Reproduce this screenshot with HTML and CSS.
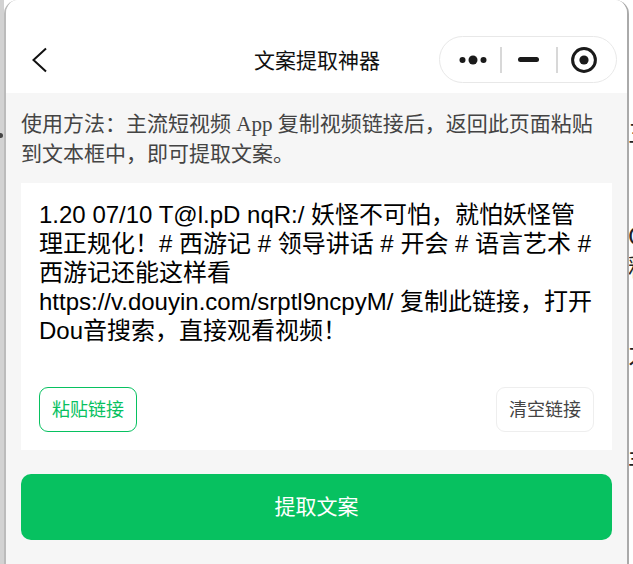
FILE: index.html
```html
<!DOCTYPE html>
<html lang="zh-CN">

<head>
    <meta charset="UTF-8">
    <meta name="viewport" content="width=device-width, initial-scale=1.0">
    <title>文案提取神器</title>
    <link rel="stylesheet" href="styles.css">
</head>

<body>
    <div class="backdrop">
        <span class="edge-dot"></span>
        <div class="phone">
            <div class="nav-bar">
                <svg class="back" width="18" height="28" viewBox="0 0 18 28">
                    <path d="M15 2.5 L2.5 14 L15 25.5" fill="none" stroke="#111" stroke-width="2" />
                </svg>
                <div class="nav-title">文案提取神器</div>
                <div class="capsule">
                    <svg class="capsule-more" width="28" height="10" viewBox="0 0 28 10">
                        <circle cx="3.5" cy="5" r="3" fill="#1a1a1a" />
                        <circle cx="14" cy="5" r="4.5" fill="#1a1a1a" />
                        <circle cx="24.5" cy="5" r="3" fill="#1a1a1a" />
                    </svg>
                    <span class="capsule-line"></span>
                    <span class="capsule-min"></span>
                    <span class="capsule-line"></span>
                    <svg class="capsule-close" width="26" height="26" viewBox="0 0 26 26">
                        <circle cx="13" cy="13" r="11.4" fill="none" stroke="#1a1a1a" stroke-width="3" />
                        <circle cx="13" cy="13" r="4.6" fill="#1a1a1a" />
                    </svg>
                </div>
            </div>
            <div class="content">
                <p class="tips">使用方法：主流短视频 App 复制视频链接后，返回此页面粘贴到文本框中，即可提取文案。</p>
                <div class="input-card">
                    <p class="link-text">1.20 07/10 T@l.pD nqR:/ 妖怪不可怕，就怕妖怪管理正规化！# 西游记 # 领导讲话 # 开会 # 语言艺术 # 西游记还能这样看<br>https://v.douyin.com/srptl9ncpyM/ 复制此链接，打开Dou音搜索，直接观看视频！</p>
                    <div class="card-actions">
                        <button type="button" class="btn-paste">粘贴链接</button>
                        <button type="button" class="btn-clear">清空链接</button>
                    </div>
                </div>
                <button type="button" class="btn-extract">提取文案</button>
            </div>
        </div>
        <!-- 窗口后面露出来的页面文字 -->
        <div class="peek">
            <span class="peek-a">三</span>
            <span class="peek-b">C</span>
            <span class="peek-c">释</span>
            <span class="peek-d">力</span>
            <span class="peek-e">丰</span>
        </div>
    </div>
</body>

</html>
```

FILE: styles.css
```css
html,
body {
    margin: 0;
    padding: 0;
    height: 100%;
    overflow: hidden;
}

body {
    font-family: "Liberation Serif", "Noto Sans CJK SC", sans-serif;
    background-color: #fff;
    color: #333;
}

.backdrop {
    height: 564px;
    padding-right: 4px;
    border-left: 4px solid #d2d2d2;
    background-color: #fff;
    box-sizing: border-box;
    position: relative;
}

.edge-dot {
    position: absolute;
    left: -4px;
    top: 133px;
    width: 3px;
    height: 5px;
    border-radius: 0 3px 3px 0;
    background-color: #444;
}

.phone {
    height: 564px;
    background-color: #f6f6f6;
    border-left: 2px solid #bbb;
    border-right: 2px solid #aaa;
    border-radius: 14px 14px 0 0;
    box-sizing: border-box;
    overflow: hidden;
}

.peek {
    position: absolute;
    top: 0;
    right: 0;
    width: 4px;
    height: 564px;
    overflow: hidden;
    font-family: "Noto Sans CJK SC", sans-serif;
    font-size: 24px;
    line-height: 30px;
    color: #222;
}

.peek span {
    position: absolute;
    left: -1px;
}

.peek-a {
    top: 117px;
}

.peek-b {
    top: 220px;
}

.peek-c {
    top: 251px;
}

.peek-d {
    top: 338px;
}

.peek-e {
    top: 444px;
}

.nav-bar {
    height: 93px;
    background-color: #fff;
    display: flex;
    align-items: flex-end;
    padding: 0 10px 10px 25px;
    box-sizing: border-box;
}

.back {
    margin-bottom: 9px;
}

.nav-title {
    font-family: "Noto Sans CJK SC", sans-serif;
    font-size: 21px;
    line-height: 28px;
    color: #111;
    margin-bottom: 10px;
    margin-left: 205px;
}

.capsule {
    width: 178px;
    height: 47px;
    margin-left: auto;
    border: 1px solid #e8e8e8;
    border-radius: 24px;
    box-sizing: border-box;
    display: flex;
    align-items: center;
    padding-left: 19px;
}

.capsule-line {
    width: 2px;
    height: 26px;
    background-color: #d8d8d8;
}

.capsule-more {
    margin-right: 13px;
}

.capsule-min {
    width: 21px;
    height: 5px;
    border-radius: 3px;
    background-color: #1a1a1a;
    margin: 0 17px 0 16px;
}

.capsule-close {
    margin-left: 13px;
}

.content {
    padding: 0 15px;
}

.tips {
    margin: 0;
    padding-top: 16px;
    font-size: 21px;
    line-height: 30px;
    color: #444;
}

.input-card {
    margin-top: 14px;
    height: 267px;
    background-color: #fff;
    padding: 17px 18px 18px;
    box-sizing: border-box;
    display: flex;
    flex-direction: column;
    justify-content: space-between;
}

.link-text {
    margin: 0;
    font-family: "Liberation Sans", "Noto Sans CJK SC", sans-serif;
    font-size: 24px;
    line-height: 29px;
    color: #000;
}

.card-actions {
    display: flex;
    justify-content: space-between;
}

.card-actions button {
    width: 98px;
    height: 45px;
    background-color: #fff;
    border-radius: 9px;
    font-family: "Noto Sans CJK SC", sans-serif;
    font-size: 18px;
    padding: 0 0 3px;
}

.btn-paste {
    border: 1px solid #07c160;
    color: #07c160;
}

.btn-clear {
    border: 1px solid #eee;
    color: #444;
}

.btn-extract {
    display: block;
    width: 100%;
    height: 66px;
    margin-top: 24px;
    padding: 0 0 4px;
    border: none;
    border-radius: 10px;
    background-color: #07c160;
    color: #fff;
    font-family: "Noto Sans CJK SC", sans-serif;
    font-size: 21px;
}
```
